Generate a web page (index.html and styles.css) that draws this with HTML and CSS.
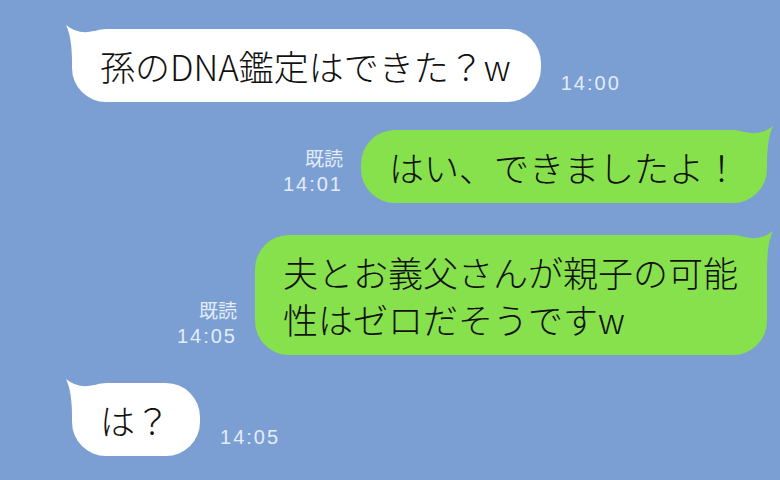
FILE: index.html
```html
<!DOCTYPE html>
<html lang="ja">
<head>
  <meta charset="UTF-8" />
  <meta name="viewport" content="width=device-width, initial-scale=1.0" />
  <title>トーク</title>
  <link rel="stylesheet" href="styles.css">
</head>
<body>
<div class="chat">
  <div class="row in">
    <div class="bubble"><svg class="tail" viewBox="-8 -6 32 42" width="32" height="42"><path d="M-6 -4 Q6 6 22 2 L22 34 L0 34 Q0 8 -6 -4 Z"/></svg>孫のDNA鑑定はできた？w</div>
    <div class="meta"><span class="time">14:00</span></div>
  </div>

  <div class="row out">
    <div class="meta"><span class="read">既読</span><span class="time">14:01</span></div>
    <div class="bubble"><svg class="tail" viewBox="-8 -6 32 42" width="32" height="42"><path d="M-6 -4 Q6 6 22 2 L22 34 L0 34 Q0 8 -6 -4 Z"/></svg>はい、できましたよ！</div>
  </div>

  <div class="row out">
    <div class="meta"><span class="read">既読</span><span class="time">14:05</span></div>
    <div class="bubble"><svg class="tail" viewBox="-8 -6 32 42" width="32" height="42"><path d="M-6 -4 Q6 6 22 2 L22 34 L0 34 Q0 8 -6 -4 Z"/></svg>夫とお義父さんが親子の可能性はゼロだそうですw</div>
  </div>

  <div class="row in">
    <div class="bubble"><svg class="tail" viewBox="-8 -6 32 42" width="32" height="42"><path d="M-6 -4 Q6 6 22 2 L22 34 L0 34 Q0 8 -6 -4 Z"/></svg>は？</div>
    <div class="meta"><span class="time">14:05</span></div>
  </div>
</div>
</body>
</html>
```

FILE: styles.css
```css
body {
  margin: 0;
  height: 480px;
  overflow: hidden;
  background: #7b9fd3;
}
.chat {
  display: flex;
  flex-direction: column;
  gap: 28px;
  padding: 29px 13px 0 72px;
}
.row {
  display: flex;
  align-items: flex-end;
  gap: 20px;
}
.row.out {
  justify-content: flex-end;
  gap: 18px;
}
.row.out + .row.out {
  margin-top: 4px;
}
.bubble {
  position: relative;
  box-sizing: border-box;
  max-width: 512px;
  padding: 13px 28px;
  border-radius: 34px;
  font-family: "Noto Sans CJK JP", sans-serif;
  font-size: 35px;
  font-weight: 300;
  line-height: 47px;
  color: #111;
}
.in .bubble {
  background: #fff;
  padding-right: 30px;
}
.out .bubble {
  background: #86e14c;
}
/* little horn on the top corner of each bubble */
.tail {
  position: absolute;
  top: -6px;
  overflow: visible;
}
.in .tail {
  left: -8px;
  fill: #fff;
}
.out .tail {
  right: -8px;
  fill: #86e14c;
  transform: scaleX(-1);
}
.meta {
  display: flex;
  flex-direction: column;
  align-items: flex-end;
  padding-bottom: 7px;
  font-family: "Liberation Sans", "Noto Sans CJK JP", sans-serif;
  line-height: 24px;
  color: #e4ecf8;
}
.in .meta {
  align-items: flex-start;
}
.read {
  font-size: 19px;
}
.time {
  font-size: 20px;
  letter-spacing: 2px;
}
```
